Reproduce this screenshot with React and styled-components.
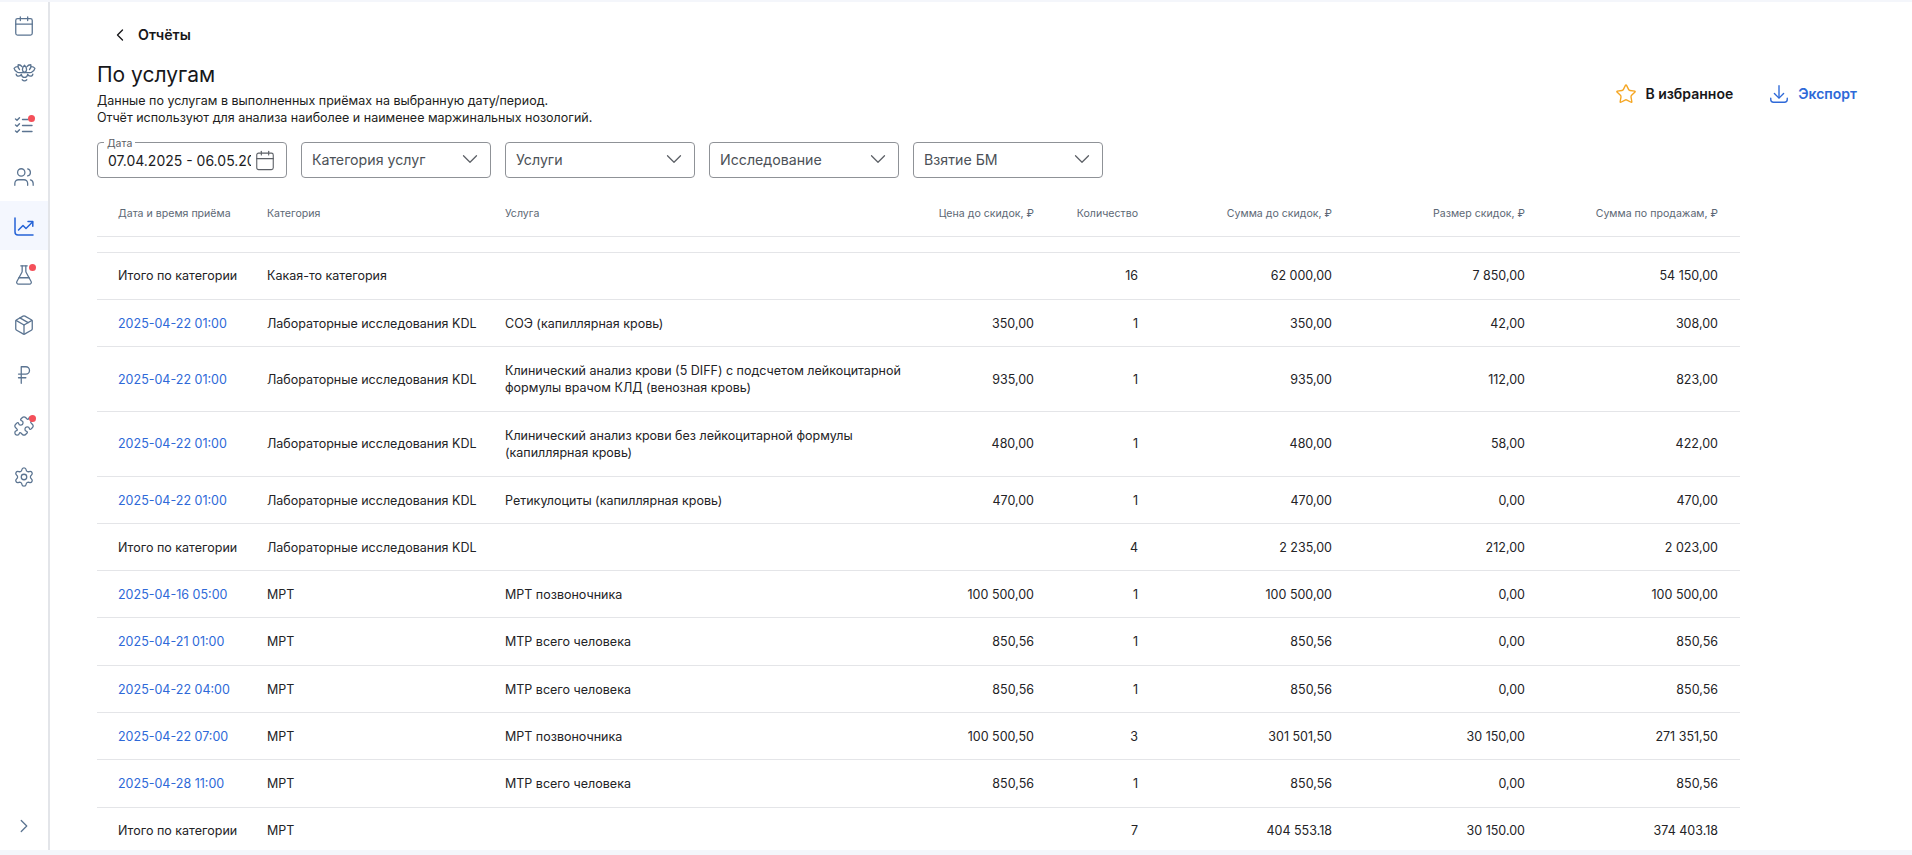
import React from 'react';
import styled, { createGlobalStyle } from 'styled-components';
import { ChevronLeft, ChevronRight, ChevronDown, Calendar, Users, FlaskConical, Package, RussianRuble, Puzzle, Settings, Star } from 'lucide-react';

const Global = createGlobalStyle`
  html, body { margin: 0; padding: 0; height: 100%; background: #f4f6fb; overflow: hidden; }
  body { font-family: Inter, "Liberation Sans", sans-serif; color: #1c1c1e; }
  * { box-sizing: border-box; }
`;

const Page = styled.div`
  height: 855px; width: 1912px; padding: 2px 0 5px; display: flex; background: #f4f6fb;
`;
const Sidebar = styled.nav`
  width: 50px; flex: none; background: #fff; border-right: 2px solid #e3e5e9;
  display: flex; flex-direction: column;
`;
const NavItem = styled.div`
  height: ${p => p.$h || 50}px; flex: none; display: flex; align-items: center; justify-content: center;
  background: ${p => p.$active ? '#f4f7fe' : 'transparent'};
  color: ${p => p.$active ? '#2563d6' : '#5b7491'};
  position: relative;
`;
const Dot = styled.span`
  position: absolute; width: 7px; height: 7px; border-radius: 50%; background: #f4505a;
  left: ${p => p.$x}px; top: ${p => p.$y}px;
`;
const Spacer = styled.div`flex: 1;`;
const Main = styled.main`
  flex: 1; min-width: 0; background: #fff; padding: 0 0 0 47px; overflow: hidden;
`;
const Back = styled.div`
  height: 64px; padding: 1px 0 0 13px; display: flex; align-items: center; gap: 8px;
  font-size: 14.2px; font-weight: 600; color: #17171a; line-height: 17px;
  margin-bottom: -6px;
`;
const HeadRow = styled.div`
  display: flex; justify-content: space-between; align-items: flex-start; width: 1760px; height: 82px;
`;
const Title = styled.h1`
  margin: 1px 0 0; font-size: 21px; font-weight: 400; line-height: 28px; color: #17171a;
`;
const Desc = styled.p`
  margin: 3px 0 0; font-size: 12.5px; line-height: 17px; color: #1d1d20;
`;
const Actions = styled.div`
  display: flex; gap: 35px; padding-top: 23px; align-items: center;
`;
const Action = styled.div`
  display: flex; align-items: center; gap: 8px; font-size: 14px; font-weight: 600; line-height: 20px;
  color: ${p => p.$blue ? '#2e69d8' : '#17171a'};
`;
const Filters = styled.div`
  display: flex; gap: 14px; height: 36px;
`;
const Field = styled.div`
  position: relative; width: 190px; height: 36px; border: 1px solid #8f9297; border-radius: 4px; background: #fff;
  display: flex; align-items: center; justify-content: space-between; padding: 0 7px 2px 10px;
  font-size: 14.2px; color: #4c5157;
`;
const DateField = styled(Field)`
  padding: 1px 10px 0 10px; color: #1c1c1e; justify-content: flex-start; gap: 3px;
`;
const DateValue = styled.span`
  width: 143px; overflow: hidden; white-space: nowrap; font-size: 14px; flex: none;
`;
const Legend = styled.span`
  position: absolute; top: -5px; left: 6px; background: #fff; padding: 0 3px; font-size: 10.5px; line-height: 11px; color: #5c6066;
`;
const Table = styled.table`
  border-collapse: collapse; table-layout: fixed; width: 1643px;
`;
const Th = styled.th`
  height: 58px; font-size: 10.6px; font-weight: 400; color: #5d6875; border-bottom: 1px solid #e4e5e8;
  text-align: ${p => p.$right ? 'right' : 'left'}; padding: 14px ${p => p.$right ? 22 : 0}px 0 12px;
  &:first-child { padding-left: 21px; }
`;
const Td = styled.td`
  font-size: 12.5px; line-height: 17.5px; color: #232326; border-bottom: 1px solid #e4e5e8;
  text-align: ${p => p.$right ? 'right' : 'left'}; padding: 14.9px ${p => p.$right ? 22 : 0}px 13.9px 12px; white-space: pre-line;
  &:first-child { padding-left: 21px; }
`;
const Gap = styled.td`
  height: 16px; border-bottom: 1px solid #e4e5e8; padding: 0;
`;
const Link = styled.span`
  color: #2e69d8;
`;

const Lotus = () => (
  <svg width="25" height="25" viewBox="0 0 24 24" fill="none" stroke="currentColor" strokeWidth="1.25" strokeLinecap="round" strokeLinejoin="round">
    <path d="M12 5c-1.4 1.2-2 2.6-2 4 0 1.2.8 2.4 2 3 1.2-.6 2-1.8 2-3 0-1.4-.6-2.8-2-4Z" />
    <path d="M9.6 6.4C8.6 5 7.2 4.4 5.8 4.6c-.2 1.8.2 3.4 1.4 4.6" />
    <path d="M14.4 6.4c1-1.4 2.4-2 3.8-1.8.2 1.8-.2 3.4-1.4 4.6" />
    <path d="M5.4 6.4C4 6.4 2.8 7 2 8c.4 1.8 1.6 3.2 3.4 3.8 2 .6 4.2.4 6.6.2 2.4.2 4.6.4 6.6-.2 1.8-.6 3-2 3.4-3.8-.8-1-2-1.6-3.4-1.6" />
    <path d="M4 13.5c.2 1.2 1.1 2 2.4 2s2.2-.7 2.6-1.8M9 14c.3 1.5 1.4 2.7 3 2.7s2.7-1.2 3-2.7M15 13.7c.4 1.1 1.3 1.8 2.6 1.8s2.2-.8 2.4-2" />
    <path d="M9.8 19c.7.7 1.4 1 2.2 1s1.5-.3 2.2-1" />
  </svg>
);

const Checklist = () => (
  <svg width="22" height="22" viewBox="0 0 22 22" fill="none" stroke="currentColor" strokeWidth="1.4" strokeLinecap="round" strokeLinejoin="round">
    <path d="M2.5 5 4 6.3 6.5 3.7" /><path d="M2.5 11 4 12.3 6.5 9.7" /><path d="M2.5 17 4 18.3 6.5 15.7" />
    <path d="M9.5 5.5H15" /><path d="M9.5 11.5H19" /><path d="M9.5 17.5H19" />
  </svg>
);

const ChartIcon = () => (
  <svg width="24" height="24" viewBox="0 0 24 24" fill="none" stroke="currentColor" strokeWidth="1.5" strokeLinecap="round" strokeLinejoin="round">
    <path d="M3 4v14a3 3 0 0 0 3 3h15" />
    <path d="M6.5 16 11 11.5l3 3 6.5-6.5" />
    <path d="M16 7.5h4.8v4.8" />
  </svg>
);

const ExportIcon = () => (
  <svg width="22" height="22" viewBox="0 0 24 24" fill="none" stroke="currentColor" strokeWidth="1.5" strokeLinecap="round" strokeLinejoin="round">
    <path d="M3 16.5v1.5a3 3 0 0 0 3 3h12a3 3 0 0 0 3-3v-1.5" />
    <path d="M12 3v13" />
    <path d="M7 11.5 12 16.5l5-5" />
  </svg>
);

const RUB = ' ₽';
const rows = [
  ['t', 'Итого по категории', 'Какая-то категория', '', '', '16', '62 000,00', '7 850,00', '54 150,00'],
  ['d', '2025-04-22 01:00', 'Лабораторные исследования KDL', 'СОЭ (капиллярная кровь)', '350,00', '1', '350,00', '42,00', '308,00'],
  ['d', '2025-04-22 01:00', 'Лабораторные исследования KDL', 'Клинический анализ крови (5 DIFF) с подсчетом лейкоцитарной\nформулы врачом КЛД (венозная кровь)', '935,00', '1', '935,00', '112,00', '823,00'],
  ['d', '2025-04-22 01:00', 'Лабораторные исследования KDL', 'Клинический анализ крови без лейкоцитарной формулы\n(капиллярная кровь)', '480,00', '1', '480,00', '58,00', '422,00'],
  ['d', '2025-04-22 01:00', 'Лабораторные исследования KDL', 'Ретикулоциты (капиллярная кровь)', '470,00', '1', '470,00', '0,00', '470,00'],
  ['t', 'Итого по категории', 'Лабораторные исследования KDL', '', '', '4', '2 235,00', '212,00', '2 023,00'],
  ['d', '2025-04-16 05:00', 'МРТ', 'МРТ позвоночника', '100 500,00', '1', '100 500,00', '0,00', '100 500,00'],
  ['d', '2025-04-21 01:00', 'МРТ', 'МТР всего человека', '850,56', '1', '850,56', '0,00', '850,56'],
  ['d', '2025-04-22 04:00', 'МРТ', 'МТР всего человека', '850,56', '1', '850,56', '0,00', '850,56'],
  ['d', '2025-04-22 07:00', 'МРТ', 'МРТ позвоночника', '100 500,50', '3', '301 501,50', '30 150,00', '271 351,50'],
  ['d', '2025-04-28 11:00', 'МРТ', 'МТР всего человека', '850,56', '1', '850,56', '0,00', '850,56'],
  ['t', 'Итого по категории', 'МРТ', '', '', '7', '404 553.18', '30 150.00', '374 403.18'],
];

const widths = [158, 238, 427, 136, 104, 194, 193, 193];

export default function App() {
  return (
    <Page>
      <Global />
      <Sidebar>
        <NavItem $h={47}><Calendar size={22} strokeWidth={1.4} /></NavItem>
        <NavItem $h={47}><Lotus /></NavItem>
        <NavItem $h={57}><Checklist /><Dot $x={28} $y={19} /></NavItem>
        <NavItem $h={48}><Users size={22} strokeWidth={1.4} /></NavItem>
        <NavItem $active $h={49}><ChartIcon /></NavItem>
        <NavItem $h={50}><FlaskConical size={22} strokeWidth={1.4} /><Dot $x={29} $y={14} /></NavItem>
        <NavItem $h={50}><Package size={22} strokeWidth={1.4} /></NavItem>
        <NavItem $h={50}><RussianRuble size={22} strokeWidth={1.4} /></NavItem>
        <NavItem $h={52}><Puzzle size={22} strokeWidth={1.4} /><Dot $x={29} $y={15} /></NavItem>
        <NavItem $h={50}><Settings size={22} strokeWidth={1.4} /></NavItem>
        <Spacer />
        <NavItem $h={48}><ChevronRight size={22} strokeWidth={1.4} /></NavItem>
      </Sidebar>
      <Main>
        <Back><ChevronLeft size={20} strokeWidth={1.6} /> Отчёты</Back>
        <HeadRow>
          <div>
            <Title>По услугам</Title>
            <Desc>Данные по услугам в выполненных приёмах на выбранную дату/период.<br />Отчёт используют для анализа наиболее и наименее маржинальных нозологий.</Desc>
          </div>
          <Actions>
            <Action><Star size={22} strokeWidth={1.5} color="#f5a623" /> В избранное</Action>
            <Action $blue><ExportIcon /> Экспорт</Action>
          </Actions>
        </HeadRow>
        <Filters>
          <DateField><Legend>Дата</Legend><DateValue>07.04.2025 - 06.05.2025</DateValue><Calendar size={23} strokeWidth={1.2} color="#5c6066" /></DateField>
          {['Категория услуг', 'Услуги', 'Исследование', 'Взятие БМ'].map(t => (
            <Field key={t}>{t}<ChevronDown size={26} strokeWidth={1.15} color="#5c6066" /></Field>
          ))}
        </Filters>
        <Table>
          <colgroup>{widths.map((w, i) => <col key={i} style={{ width: w }} />)}</colgroup>
          <thead>
            <tr>
              <Th>Дата и время приёма</Th>
              <Th>Категория</Th>
              <Th>Услуга</Th>
              <Th $right>Цена до скидок,{RUB}</Th>
              <Th $right>Количество</Th>
              <Th $right>Сумма до скидок,{RUB}</Th>
              <Th $right>Размер скидок,{RUB}</Th>
              <Th $right>Сумма по продажам,{RUB}</Th>
            </tr>
          </thead>
          <tbody>
            <tr><Gap colSpan={8} /></tr>
            {rows.map((r, i) => (
              <tr key={i}>
                <Td>{r[0] === 'd' ? <Link>{r[1]}</Link> : r[1]}</Td>
                <Td>{r[2]}</Td>
                <Td>{r[3]}</Td>
                {r.slice(4).map((v, j) => <Td key={j} $right>{v}</Td>)}
              </tr>
            ))}
          </tbody>
        </Table>
      </Main>
    </Page>
  );
}
